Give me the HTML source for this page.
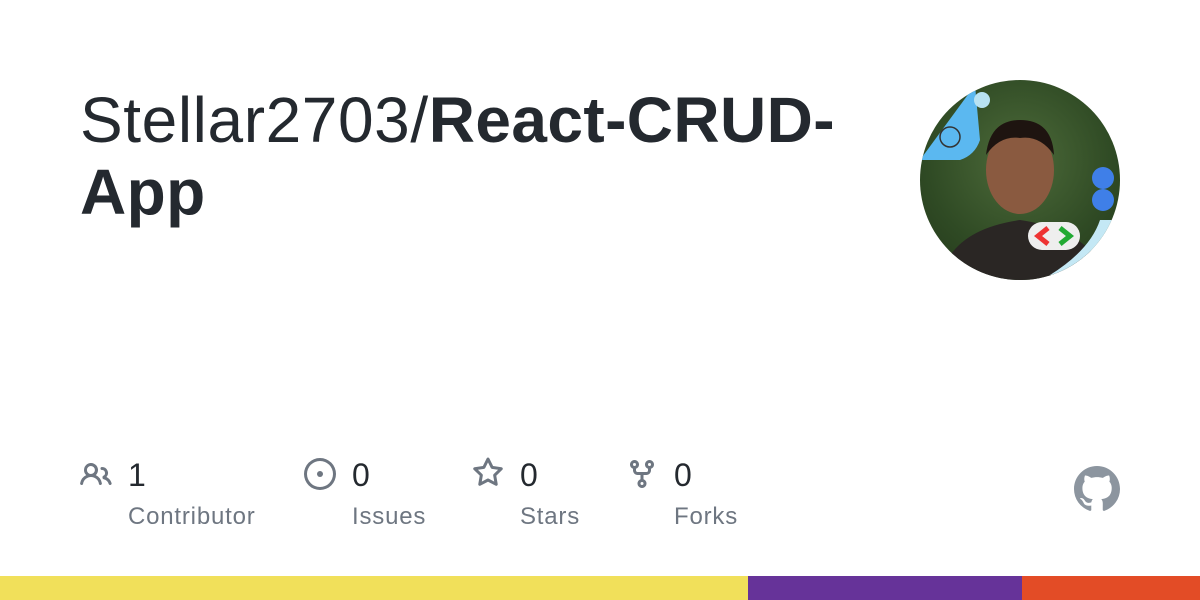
<!DOCTYPE html>
<html><head><meta charset="utf-8"><style>
body{margin:0;width:1200px;height:600px;background:#fff;position:relative;overflow:hidden;font-family:"Liberation Sans",sans-serif;}
.title{position:absolute;left:80px;top:84px;font-size:64px;line-height:72px;color:#24292f;width:800px;letter-spacing:0.6px}
.title b{font-weight:700;letter-spacing:0.4px}
.stat{position:absolute;top:457px}
.num{position:absolute;font-size:32px;color:#24292f;top:0}
.lbl{position:absolute;font-size:24px;color:#6e7681;top:46px;white-space:nowrap;letter-spacing:0.8px}
.bar{position:absolute;top:576px;height:24px}
</style></head><body>
<div class="title">Stellar2703/<b>React-CRUD-<br>App</b></div>

<div style="position:absolute;left:920px;top:80px;width:200px;height:200px;border-radius:50%;overflow:hidden;background:radial-gradient(circle at 50% 40%,#4d6b3a,#2f4a24 60%,#22361a);">
<svg width="200" height="200" viewBox="0 0 200 200">
<ellipse cx="100" cy="90" rx="34" ry="44" fill="#8a5a40"/>
<path d="M66 75 Q70 40 100 40 Q132 40 134 75 Q120 55 100 58 Q80 55 66 75Z" fill="#1e1410"/>
<path d="M20 200 Q30 150 100 140 Q170 150 190 200Z" fill="#2a2624"/>
<path d="M0 80 L55 5 L60 60 Q55 75 40 80Z" fill="#5bb8f0"/>
<circle cx="30" cy="57" r="10" fill="none" stroke="#333" stroke-width="1.5"/>
<circle cx="62" cy="20" r="8" fill="#b8e2f2"/>
<circle cx="183" cy="98" r="11" fill="#3f7fe8"/>
<circle cx="183" cy="120" r="11" fill="#3f7fe8"/>
<path d="M200 140 L180 140 Q170 170 130 195 L200 200Z" fill="#c4e8f5"/>
<rect x="108" y="142" width="52" height="28" rx="14" fill="#eee"/>
<path d="M128 148 L118 156 L128 164" stroke="#e33" stroke-width="5" fill="none"/>
<path d="M140 148 L150 156 L140 164" stroke="#2a3" stroke-width="5" fill="none"/>
</svg></div>

<svg style="position:absolute;left:80px;top:459px" width="32" height="32" viewBox="0 0 16 16" fill="#6e7681"><path d="M2 5.5a3.5 3.5 0 1 1 5.898 2.549 5.508 5.508 0 0 1 3.034 4.084.75.75 0 1 1-1.482.235 4 4 0 0 0-7.9 0 .75.75 0 0 1-1.482-.236A5.507 5.507 0 0 1 3.102 8.05 3.493 3.493 0 0 1 2 5.5ZM11 4a3.001 3.001 0 0 1 2.22 5.018 5.01 5.01 0 0 1 2.56 3.012.749.749 0 0 1-.885.954.752.752 0 0 1-.549-.514 3.507 3.507 0 0 0-2.522-2.372.75.75 0 0 1-.574-.73v-.352a.75.75 0 0 1 .416-.672A1.5 1.5 0 0 0 11 5.5.75.75 0 0 1 11 4Zm-5.5-.5a2 2 0 1 0-.001 3.999A2 2 0 0 0 5.5 3.5Z"/></svg>
<div class="stat" style="left:128px"><div class="num">1</div><div class="lbl">Contributor</div></div>

<svg style="position:absolute;left:304px;top:458px" width="32" height="32" viewBox="0 0 16 16" fill="#6e7681"><path d="M8 9.5a1.5 1.5 0 1 0 0-3 1.5 1.5 0 0 0 0 3Z"/><path d="M8 0a8 8 0 1 1 0 16A8 8 0 0 1 8 0ZM1.5 8a6.5 6.5 0 1 0 13 0 6.5 6.5 0 0 0-13 0Z"/></svg>
<div class="stat" style="left:352px"><div class="num">0</div><div class="lbl">Issues</div></div>

<svg style="position:absolute;left:472px;top:457px" width="32" height="32" viewBox="0 0 16 16" fill="#6e7681"><path d="M8 .25a.75.75 0 0 1 .673.418l1.882 3.815 4.21.612a.75.75 0 0 1 .416 1.279l-3.046 2.97.719 4.192a.751.751 0 0 1-1.088.791L8 12.347l-3.766 1.98a.75.75 0 0 1-1.088-.79l.72-4.194L.818 6.374a.75.75 0 0 1 .416-1.28l4.21-.611L7.327.668A.75.75 0 0 1 8 .25Zm0 2.445L6.615 5.5a.75.75 0 0 1-.564.41l-3.097.45 2.24 2.184a.75.75 0 0 1 .216.664l-.528 3.084 2.769-1.456a.75.75 0 0 1 .698 0l2.77 1.456-.53-3.084a.75.75 0 0 1 .216-.664l2.24-2.183-3.096-.45a.75.75 0 0 1-.564-.41L8 2.694Z"/></svg>
<div class="stat" style="left:520px"><div class="num">0</div><div class="lbl">Stars</div></div>

<svg style="position:absolute;left:626px;top:458px" width="32" height="32" viewBox="0 0 16 16" fill="#6e7681"><path d="M5 5.372v.878c0 .414.336.75.75.75h4.5a.75.75 0 0 0 .75-.75v-.878a2.25 2.25 0 1 1 1.5 0v.878a2.25 2.25 0 0 1-2.250 2.25h-1.5v2.128a2.251 2.251 0 1 1-1.5 0V8.5h-1.5A2.25 2.25 0 0 1 3.5 6.25v-.878a2.25 2.25 0 1 1 1.5 0ZM5 3.250a.75.75 0 1 0-1.5 0 .75.75 0 0 0 1.5 0Zm6.75.75a.75.75 0 1 0 0-1.5.75.75 0 0 0 0 1.5Zm-3 8.75a.75.75 0 1 0-1.5 0 .75.75 0 0 0 1.5 0Z"/></svg>
<div class="stat" style="left:674px"><div class="num">0</div><div class="lbl">Forks</div></div>

<svg style="position:absolute;left:1074px;top:466px" width="46" height="46" viewBox="0 0 16 16" fill="#8c959f"><path d="M8 0c4.42 0 8 3.58 8 8a8.013 8.013 0 0 1-5.45 7.59c-.4.08-.55-.17-.55-.38 0-.27.01-1.130.01-2.2 0-.75-.25-1.23-.54-1.48 1.78-.2 3.65-.88 3.65-3.95 0-.88-.31-1.59-.82-2.15.08-.2.36-1.02-.08-2.12 0 0-.67-.22-2.2.82-.64-.18-1.32-.27-2-.27-.68 0-1.36.09-2 .27-1.53-1.03-2.2-.82-2.2-.82-.44 1.1-.16 1.92-.08 2.12-.51.56-.82 1.28-.82 2.15 0 3.06 1.86 3.75 3.64 3.950-.23.2-.44.55-.51 1.07-.46.21-1.61.55-2.330-.66-.15-.24-.6-.83-1.23-.82-.67.01-.27.38.01.53.34.19.73.9.82 1.13.16.45.68 1.31 2.69.94 0 .67.01 1.3.01 1.49 0 .21-.15.45-.55.38A7.995 7.995 0 0 1 0 8c0-4.42 3.58-8 8-8Z"/></svg>

<div class="bar" style="left:0;width:748px;background:#f1e05a"></div>
<div class="bar" style="left:748px;width:274px;background:#663399"></div>
<div class="bar" style="left:1022px;width:178px;background:#e34c26"></div>
</body></html>
